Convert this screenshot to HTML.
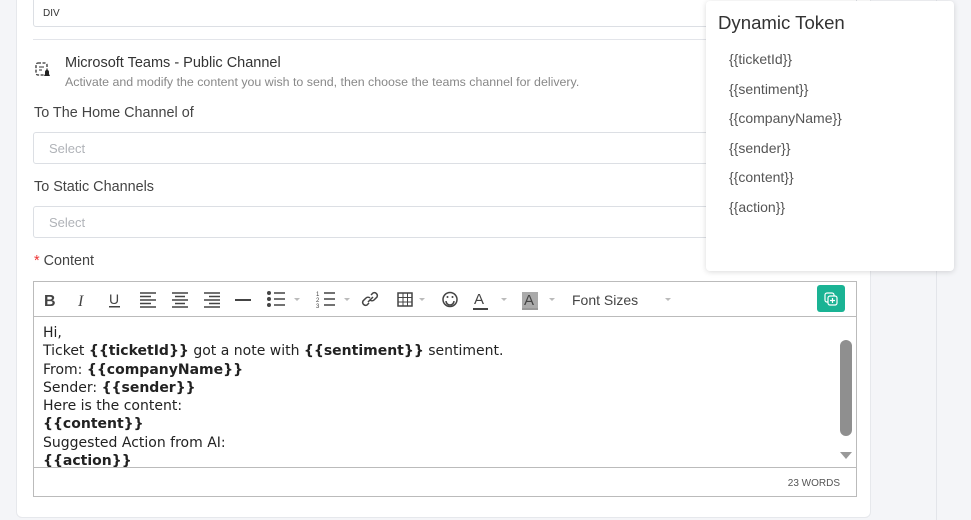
<!DOCTYPE html>
<html><head><meta charset="utf-8"><style>
*{box-sizing:border-box;margin:0;padding:0}
body{width:971px;height:520px;overflow:hidden;background:#f4f5f8;font-family:"Liberation Sans",sans-serif;position:relative;color:#333}
.card{position:absolute;left:16px;top:-10px;width:855px;height:528px;background:#fff;border:1px solid #e6e8ec;border-radius:6px}
.rstrip{position:absolute;left:936px;top:0;width:1px;height:520px;background:#e3e5ea}
.abs{position:absolute}
.inp{position:absolute;left:33px;width:824px;height:32px;border:1px solid #dcdfe4;border-radius:3px;background:#fff;font-size:13px;color:#b0b3b8;padding:8px 15px}
.lbl{position:absolute;left:34px;font-size:14.4px;color:#444}
.tb{position:absolute;left:33px;top:281px;width:824px;height:36px;border:1px solid #bbb;background:#fff}
.tb svg{position:absolute;top:0}
.ed{position:absolute;left:33px;top:317px;width:824px;height:151px;border:1px solid #bbb;border-top:none;background:#fff;font-family:"DejaVu Sans",sans-serif;font-size:14px;line-height:18.3px;padding:7px 9px;color:#222}
.ft{position:absolute;left:33px;top:467px;width:824px;height:30px;border:1px solid #bbb;background:#fff;font-size:10px;color:#555;text-align:right;padding:10px 16px}
.pop{position:absolute;left:706px;top:1px;width:248px;height:270px;background:#fff;border-radius:4px;box-shadow:0 1px 6px rgba(0,0,0,.15)}
.pop h3{position:absolute;left:12px;top:11px;font-size:18.6px;font-weight:normal;color:#333}
.pop div{position:absolute;left:23px;font-size:14px;color:#555}
</style></head><body>
<div class="card"></div>
<div class="rstrip"></div>
<div class="inp" style="top:-6px;height:33px;color:#333;font-size:10px;padding:13px 9px">DIV</div>
<div class="abs" style="left:33px;top:39px;width:824px;height:1px;background:#e3e5ea"></div>
<svg class="abs" style="left:35px;top:62px" width="16" height="16" viewBox="0 0 16 16"><rect x="1" y="1" width="11" height="12" rx="2" fill="none" stroke="#333" stroke-width="1.3" stroke-dasharray="3 1.5"/><path d="M4 5h5M4 8h3" stroke="#333"/><path d="M9 14h6l-1-2v-2a2 2 0 0 0-4 0v2z" fill="#222"/></svg>
<div class="abs" style="left:65px;top:55px;font-size:14.5px;color:#333">Microsoft Teams - Public Channel</div>
<div class="abs" style="left:65px;top:75px;font-size:12.4px;color:#888">Activate and modify the content you wish to send, then choose the teams channel for delivery.</div>
<div class="lbl" style="top:105px">To The Home Channel of</div>
<div class="inp" style="top:132px">Select</div>
<div class="lbl" style="top:179px">To Static Channels</div>
<div class="inp" style="top:206px">Select</div>
<div class="lbl" style="top:253px"><span style="color:#e33">*</span> Content</div>
<div class="tb">
<svg width="700" height="34" viewBox="0 0 700 34">
<g fill="#444" font-family="Liberation Sans" font-size="16">
<text x="10" y="24" font-weight="bold">B</text>
<text x="44" y="24" font-style="italic" font-family="Liberation Serif">I</text>
<text x="75" y="22" font-size="14">U</text><rect x="75" y="24" width="11" height="1.5"/>
</g>
<g stroke="#444" stroke-width="1.6">
<path d="M106 11h16M106 14.5h11M106 18h16M106 21.5h11M106 25h16"/>
<path d="M138 11h16M141 14.5h10M138 18h16M141 21.5h10M138 25h16"/>
<path d="M170 11h16M175 14.5h11M170 18h16M175 21.5h11M170 25h16"/>
<path d="M201 18h16" stroke-width="2"/>
<path d="M240 11h11M240 17h11M240 23h11"/>
<path d="M290 11h11M290 17h11M290 23h11"/>
</g>
<g fill="#444"><circle cx="235" cy="11" r="2"/><circle cx="235" cy="17" r="2"/><circle cx="235" cy="23" r="2"/>
<text x="282" y="14" font-size="6">1</text><text x="282" y="20" font-size="6">2</text><text x="282" y="26" font-size="6">3</text></g>
<g fill="#bbb"><path d="M260 16h6l-3 3zM310 16h6l-3 3zM385 16h6l-3 3zM467 16h6l-3 3zM515 16h6l-3 3zM631 16h6l-3 3z"/></g>
<g fill="none" stroke="#444" stroke-width="1.5">
<path d="M335 21l-2 2a3 3 0 0 1-4-4l3-3a3 3 0 0 1 4 0M337 13l2-2a3 3 0 0 1 4 4l-3 3a3 3 0 0 1-4 0M334 20l5-5"/>
<rect x="364" y="11" width="14" height="13"/><path d="M364 15.5h14M364 20h14M369 11v13M373.5 11v13" stroke-width="1"/>
<circle cx="416" cy="17.5" r="7"/><path d="M412 19a4 4 0 0 0 8 0" /></g>
<g fill="#444"><circle cx="413.5" cy="15" r="1"/><circle cx="418.5" cy="15" r="1"/>
<text x="440" y="22" font-size="15">A</text><rect x="439" y="26" width="15" height="2"/>
<rect x="488" y="10" width="16" height="16" fill="#aaa"/><text x="490" y="23" font-size="15" fill="#444">A</text><rect x="488" y="26" width="16" height="2" fill="#999"/>
<text x="538" y="23" font-size="14">Font Sizes</text></g>
</svg>
<div class="abs" style="left:783px;top:3px;width:28px;height:27px;background:#1ab394;border-radius:3px"><svg width="28" height="27"><rect x="8" y="8" width="9" height="9" rx="2" fill="none" stroke="#fff" stroke-width="1.2"/><rect x="11" y="11" width="9" height="9" rx="2" fill="#1ab394" stroke="#fff" stroke-width="1.2"/><path d="M15.5 13v5M13 15.5h5" stroke="#fff" stroke-width="1.2"/></svg></div>
</div>
<div class="ed">Hi,<br>Ticket <b>{{ticketId}}</b> got a note with <b>{{sentiment}}</b> sentiment.<br>From: <b>{{companyName}}</b><br>Sender: <b>{{sender}}</b><br>Here is the content:<br><b>{{content}}</b><br>Suggested Action from AI:<br><b>{{action}}</b></div>
<div class="abs" style="left:840px;top:340px;width:12px;height:96px;background:#8f8f8f;border-radius:6px"></div>
<div class="abs" style="left:840px;top:452px;width:0;height:0;border-left:6px solid transparent;border-right:6px solid transparent;border-top:7px solid #999"></div>
<div class="ft">23 WORDS</div>
<div class="pop"><h3>Dynamic Token</h3>
<div style="top:50px">{{ticketId}}</div><div style="top:80px">{{sentiment}}</div><div style="top:109px">{{companyName}}</div><div style="top:139px">{{sender}}</div><div style="top:168px">{{content}}</div><div style="top:198px">{{action}}</div></div>
</body></html>
